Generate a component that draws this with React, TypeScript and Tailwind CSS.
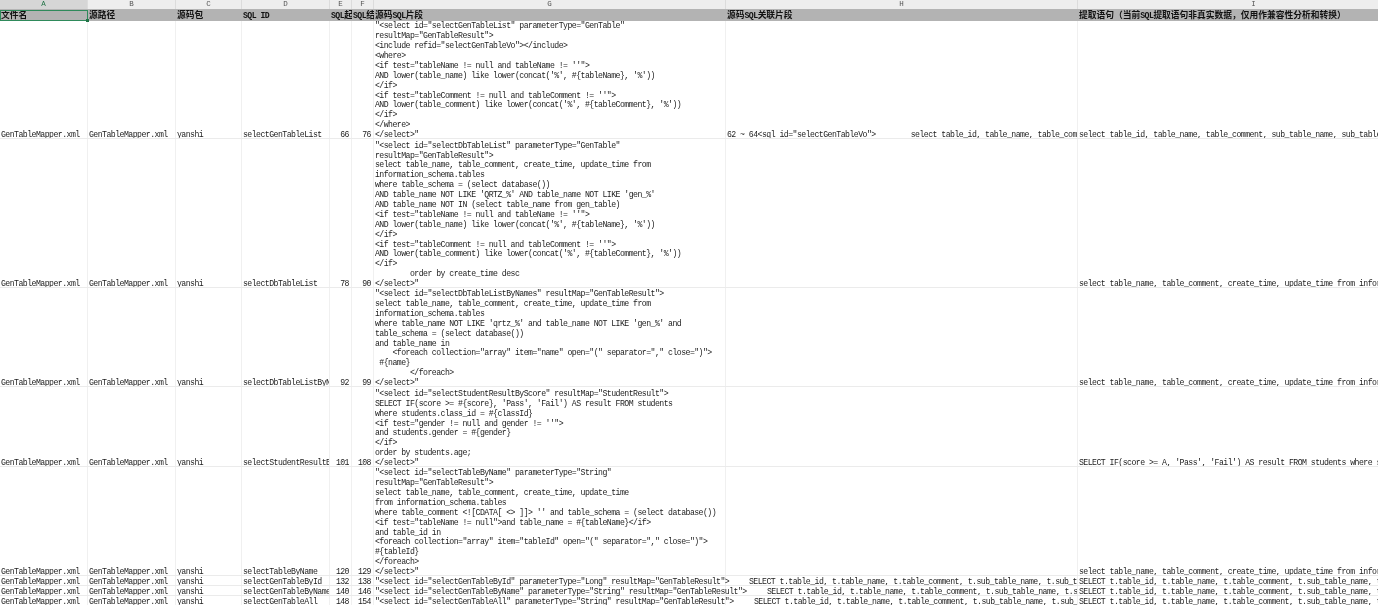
import React from 'react';

const font = "font-['Liberation_Mono','Noto_Sans_CJK_SC',monospace]";

const columns = [
  { letter: 'A', width: 'w-[88px]' },
  { letter: 'B', width: 'w-[88px]' },
  { letter: 'C', width: 'w-[66px]' },
  { letter: 'D', width: 'w-[88px]' },
  { letter: 'E', width: 'w-[22px]' },
  { letter: 'F', width: 'w-[22px]' },
  { letter: 'G', width: 'w-[352px]' },
  { letter: 'H', width: 'w-[352px]' },
  { letter: 'I', width: 'w-[352px]' },
];

const Zh = ({ children }: { children: React.ReactNode }) => (
  <span className="text-[8.75px] tracking-normal">{children}</span>
);

const headers: React.ReactNode[] = [
  <Zh>文件名</Zh>,
  <Zh>源路径</Zh>,
  <Zh>源码包</Zh>,
  'SQL ID',
  <>SQL<Zh>起始行</Zh></>,
  <>SQL<Zh>结束行</Zh></>,
  <><Zh>源码</Zh>SQL<Zh>片段</Zh></>,
  <><Zh>源码</Zh>SQL<Zh>关联片段</Zh></>,
  <><Zh>提取语句（当前</Zh>SQL<Zh>提取语句非真实数据，仅用作兼容性分析和转换）</Zh></>,
];

const file = 'GenTableMapper.xml';

const rows = [
  {
    height: 'h-[118px]',
    id: 'selectGenTableList',
    start: 66,
    end: 76,
    indent: '',
    lines: [
      '"<select id="selectGenTableList" parameterType="GenTable"',
      'resultMap="GenTableResult">',
      '<include refid="selectGenTableVo"></include>',
      '<where>',
      `<if test="tableName != null and tableName != ''">`,
      "AND lower(table_name) like lower(concat('%', #{tableName}, '%'))",
      '</if>',
      `<if test="tableComment != null and tableComment != ''">`,
      "AND lower(table_comment) like lower(concat('%', #{tableComment}, '%'))",
      '</if>',
      '</where>',
      '</select>"',
    ],
    related: '62 ~ 64<sql id="selectGenTableVo">        select table_id, table_name, table_comment, sub_table_name',
    extract: 'select table_id, table_name, table_comment, sub_table_name, sub_table_fk_name, class_name',
  },
  {
    height: 'h-[149px]',
    id: 'selectDbTableList',
    start: 78,
    end: 90,
    indent: '',
    lines: [
      '"<select id="selectDbTableList" parameterType="GenTable"',
      'resultMap="GenTableResult">',
      'select table_name, table_comment, create_time, update_time from',
      'information_schema.tables',
      'where table_schema = (select database())',
      "AND table_name NOT LIKE 'QRTZ_%' AND table_name NOT LIKE 'gen_%'",
      'AND table_name NOT IN (select table_name from gen_table)',
      `<if test="tableName != null and tableName != ''">`,
      "AND lower(table_name) like lower(concat('%', #{tableName}, '%'))",
      '</if>',
      `<if test="tableComment != null and tableComment != ''">`,
      "AND lower(table_comment) like lower(concat('%', #{tableComment}, '%'))",
      '</if>',
      '        order by create_time desc',
      '</select>"',
    ],
    related: '',
    extract: 'select table_name, table_comment, create_time, update_time from information_schema.tables',
  },
  {
    height: 'h-[99px]',
    id: 'selectDbTableListByNames',
    start: 92,
    end: 99,
    indent: '',
    lines: [
      '"<select id="selectDbTableListByNames" resultMap="GenTableResult">',
      'select table_name, table_comment, create_time, update_time from',
      'information_schema.tables',
      "where table_name NOT LIKE 'qrtz_%' and table_name NOT LIKE 'gen_%' and",
      'table_schema = (select database())',
      'and table_name in',
      '    <foreach collection="array" item="name" open="(" separator="," close=")">',
      ' #{name}',
      '        </foreach>',
      '</select>"',
    ],
    related: '',
    extract: 'select table_name, table_comment, create_time, update_time from information_schema.tables',
  },
  {
    height: 'h-[80px]',
    id: 'selectStudentResultByScore',
    start: 101,
    end: 108,
    indent: '',
    lines: [
      '"<select id="selectStudentResultByScore" resultMap="StudentResult">',
      "SELECT IF(score >= #{score}, 'Pass', 'Fail') AS result FROM students",
      'where students.class_id = #{classId}',
      `<if test="gender != null and gender != ''">`,
      'and students.gender = #{gender}',
      '</if>',
      'order by students.age;',
      '</select>"',
    ],
    related: '',
    extract: "SELECT IF(score >= A, 'Pass', 'Fail') AS result FROM students where students.class_id = 1",
  },
  {
    height: 'h-[109px]',
    id: 'selectTableByName',
    start: 120,
    end: 129,
    indent: '',
    lines: [
      '"<select id="selectTableByName" parameterType="String"',
      'resultMap="GenTableResult">',
      'select table_name, table_comment, create_time, update_time',
      'from information_schema.tables',
      "where table_comment <![CDATA[ <> ]]> '' and table_schema = (select database())",
      '<if test="tableName != null">and table_name = #{tableName}</if>',
      'and table_id in',
      '<foreach collection="array" item="tableId" open="(" separator="," close=")">',
      '#{tableId}',
      '</foreach>',
      '</select>"',
    ],
    related: '',
    extract: 'select table_name, table_comment, create_time, update_time from information_schema.tables',
  },
  {
    height: 'h-[10px]',
    id: 'selectGenTableById',
    start: 132,
    end: 138,
    indent: 'pl-[23px]',
    lines: ['"<select id="selectGenTableById" parameterType="Long" resultMap="GenTableResult">'],
    related: 'SELECT t.table_id, t.table_name, t.table_comment, t.sub_table_name, t.sub_table_fk_name, t.class_name',
    extract: 'SELECT t.table_id, t.table_name, t.table_comment, t.sub_table_name, t.sub_table_fk_name',
  },
  {
    height: 'h-[10px]',
    id: 'selectGenTableByName',
    start: 140,
    end: 146,
    indent: 'pl-[41px]',
    lines: ['"<select id="selectGenTableByName" parameterType="String" resultMap="GenTableResult">'],
    related: 'SELECT t.table_id, t.table_name, t.table_comment, t.sub_table_name, t.sub_table_fk_name, t.class_name',
    extract: 'SELECT t.table_id, t.table_name, t.table_comment, t.sub_table_name, t.sub_table_fk_name',
  },
  {
    height: 'h-[10px]',
    id: 'selectGenTableAll',
    start: 148,
    end: 154,
    indent: 'pl-[28px]',
    lines: ['"<select id="selectGenTableAll" parameterType="String" resultMap="GenTableResult">'],
    related: 'SELECT t.table_id, t.table_name, t.table_comment, t.sub_table_name, t.sub_table_fk_name, t.class_name',
    extract: 'SELECT t.table_id, t.table_name, t.table_comment, t.sub_table_name, t.sub_table_fk_name',
  },
];

const cell = 'flex flex-col justify-end shrink-0 border-r border-[#f0f0f0] pl-[1px] whitespace-pre';

// excel draws the text low in the cell, nudge it down from the line box
const Text = ({ children }: { children: React.ReactNode }) => (
  <div className="relative top-[2px] h-[9.9px] shrink-0">{children}</div>
);

export default function App() {
  return (
    <div className={`${font} h-[605px] w-[1378px] overflow-hidden bg-white text-[8.2px] leading-[9.9px] tracking-[-0.54px] text-[#1c1c1c] blur-[0.25px]`}>
      {/* column letters */}
      <div className="flex h-[10px] bg-[#eeeeee] border-b border-[#b4b4b4] tracking-normal">
        {columns.map((col) => (
          <div
            key={col.letter}
            className={`${col.width} shrink-0 flex items-center justify-center border-r border-[#dcdcdc] text-[7.5px] ${
              col.letter === 'A' ? 'bg-[#d6d6d6] text-[#217346]' : 'text-[#555]'
            }`}
          >
            {col.letter}
          </div>
        ))}
      </div>

      {/* header row */}
      <div className="relative flex h-[11px] bg-[#b3b3b3] font-bold text-[#111]">
        {columns.map((col, i) => (
          <div key={col.letter} className={`${col.width} shrink-0 overflow-hidden whitespace-pre pl-[1px] leading-[11px]`}>
            {headers[i]}
          </div>
        ))}
        {/* selected cell */}
        <div className="absolute left-0 top-0 h-[11px] w-[88px] border border-[#2f8a5b]" />
        <div className="absolute left-[86px] top-[9px] h-[3px] w-[3px] bg-[#217346]" />
      </div>

      {/* data rows */}
      {rows.map((row) => (
        <div key={row.id} className={`flex ${row.height} border-b border-[#ebebeb]`}>
          <div className={`${cell} w-[88px] overflow-hidden`}><Text>{file}</Text></div>
          <div className={`${cell} w-[88px] overflow-hidden`}><Text>{file}</Text></div>
          <div className={`${cell} w-[66px] overflow-hidden`}><Text>yanshi</Text></div>
          <div className={`${cell} w-[88px] overflow-hidden`}><Text>{row.id}</Text></div>
          <div className={`${cell} w-[22px] items-end pr-[2px]`}><Text>{row.start}</Text></div>
          <div className={`${cell} w-[22px] items-end pr-[2px]`}><Text>{row.end}</Text></div>
          <div className={`${cell} w-[352px]`}>
            {row.lines.map((line, i) => (
              <Text key={i}>{line}</Text>
            ))}
          </div>
          <div className={`${cell} w-[352px] overflow-hidden ${row.indent}`}><Text>{row.related}</Text></div>
          <div className={`${cell} w-[352px] overflow-hidden`}><Text>{row.extract}</Text></div>
        </div>
      ))}
    </div>
  );
}
